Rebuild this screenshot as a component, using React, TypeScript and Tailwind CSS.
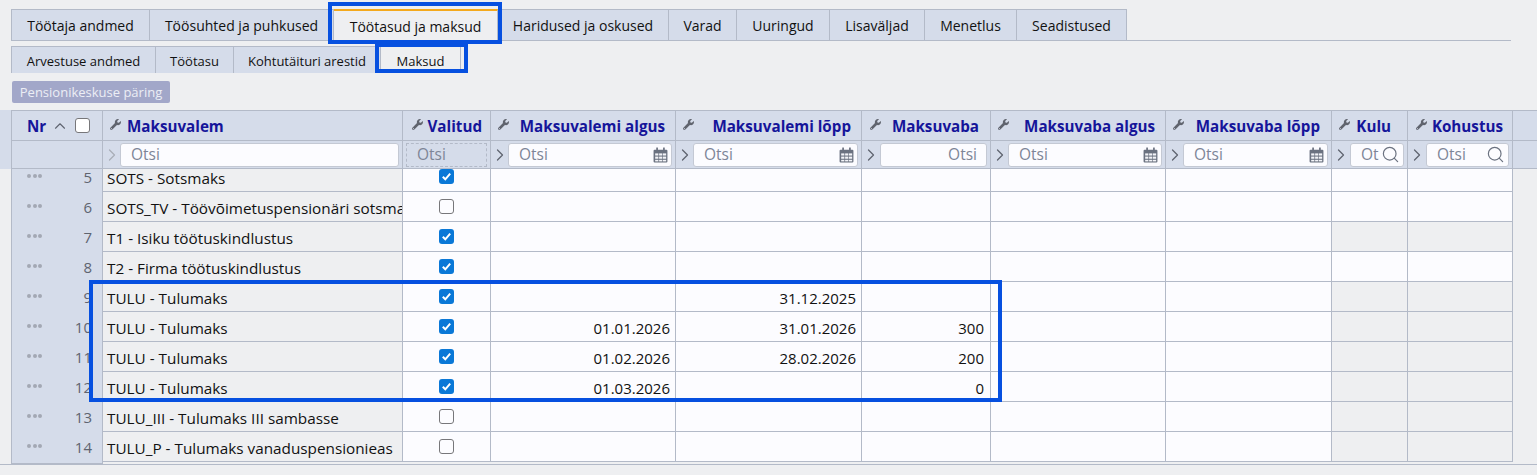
import React from "react";
import { ChevronRight, ChevronUp, Search } from "lucide-react";
import { FaWrench } from "react-icons/fa";

const GRID = "grid grid-cols-[92px_300px_88px_185px_186px_129px_175px_166px_76px_105px]";
const LINE = "border-[#b3bac8]";

const topTabs = [
  { t: "Töötaja andmed", w: "w-[139px]" },
  { t: "Töösuhted ja puhkused", w: "w-[184px]" },
  { t: "Töötasud ja maksud", w: "w-[164px]", active: true },
  { t: "Haridused ja oskused", w: "w-[171px]" },
  { t: "Varad", w: "w-[68px]" },
  { t: "Uuringud", w: "w-[93px]" },
  { t: "Lisaväljad", w: "w-[95px]" },
  { t: "Menetlus", w: "w-[92px]" },
  { t: "Seadistused", w: "w-[110px]" },
];

const subTabs = [
  { t: "Arvestuse andmed", w: "w-[145px]" },
  { t: "Töötasu", w: "w-[78px]" },
  { t: "Kohtutäituri arestid", w: "w-[147px]" },
  { t: "Maksud", w: "w-[80px]", active: true },
];

const heads = [
  { t: "Maksuvalem", c: "justify-start pl-[7px]", g: "ml-[6px]" },
  { t: "Valitud", c: "justify-between pl-[9px] pr-[8px]", g: "" },
  { t: "Maksuvalemi algus", c: "justify-between pl-[7px] pr-[10px]", g: "" },
  { t: "Maksuvalemi lõpp", c: "justify-between pl-[7px] pr-[10px]", g: "" },
  { t: "Maksuvaba", c: "justify-between pl-[8px] pr-[11px]", g: "" },
  { t: "Maksuvaba algus", c: "justify-between pl-[7px] pr-[10px]", g: "" },
  { t: "Maksuvaba lõpp", c: "justify-between pl-[7px] pr-[11px]", g: "" },
  { t: "Kulu", c: "justify-between pl-[7px] pr-[16px]", g: "" },
  { t: "Kohustus", c: "justify-between pl-[8px] pr-[9px]", g: "" },
];

type Row = { n: number; name: string; on: boolean; a?: string; b?: string; v?: string; gray?: boolean };
const rows: Row[] = [
  { n: 5, name: "SOTS - Sotsmaks", on: true },
  { n: 6, name: "SOTS_TV - Töövõimetuspensionäri sotsmaks", on: false },
  { n: 7, name: "T1 - Isiku töötuskindlustus", on: true, gray: true },
  { n: 8, name: "T2 - Firma töötuskindlustus", on: true },
  { n: 9, name: "TULU - Tulumaks", on: true, b: "31.12.2025", gray: true },
  { n: 10, name: "TULU - Tulumaks", on: true, a: "01.01.2026", b: "31.01.2026", v: "300", gray: true },
  { n: 11, name: "TULU - Tulumaks", on: true, a: "01.02.2026", b: "28.02.2026", v: "200", gray: true },
  { n: 12, name: "TULU - Tulumaks", on: true, a: "01.03.2026", v: "0", gray: true },
  { n: 13, name: "TULU_III - Tulumaks III sambasse", on: false, gray: true },
  { n: 14, name: "TULU_P - Tulumaks vanaduspensionieas", on: false, gray: true },
];

function Calendar() {
  return (
    <svg width="15" height="16" viewBox="0 0 14 15" className="shrink-0">
      <path d="M1.5 2.5h11a1 1 0 0 1 1 1v10a1 1 0 0 1-1 1h-11a1 1 0 0 1-1-1v-10a1 1 0 0 1 1-1z" fill="#6b7280" />
      <rect x="3" y="0.5" width="1.6" height="3" fill="#6b7280" />
      <rect x="9.4" y="0.5" width="1.6" height="3" fill="#6b7280" />
      <g fill="#f3f4f8">
        <rect x="2" y="6" width="3" height="2" />
        <rect x="5.7" y="6" width="3" height="2" />
        <rect x="9.3" y="6" width="3" height="2" />
        <rect x="2" y="9" width="3" height="2" />
        <rect x="5.7" y="9" width="3" height="2" />
        <rect x="9.3" y="9" width="3" height="2" />
        <rect x="2" y="12" width="3" height="1.5" />
        <rect x="5.7" y="12" width="3" height="1.5" />
        <rect x="9.3" y="12" width="3" height="1.5" />
      </g>
    </svg>
  );
}

function Check({ on, small }: { on: boolean; small?: boolean }) {
  if (on) {
    return (
      <span className="flex h-[15px] w-[15px] items-center justify-center rounded-[3px] bg-[#0a78d7]">
        <svg width="11" height="11" viewBox="0 0 11 11">
          <path d="M1.8 5.8 4.3 8.3 9.2 2.6" fill="none" stroke="#ffffff" strokeWidth="2" />
        </svg>
      </span>
    );
  }
  return <span className={`block h-[15px] w-[15px] rounded-[3px] border border-[#77777a] ${small ? "bg-white" : "bg-[#fcfcff]"}`} />;
}

function Filter({ kind, w, right, faded, text = "Otsi" }: { kind?: "cal" | "search"; w: string; right?: boolean; faded?: boolean; text?: string }) {
  return (
    <div className="flex h-full items-center justify-between pr-[3px]">
      <ChevronRight size={20} strokeWidth={1.5} className={`-mr-[4px] -ml-[1px] shrink-0 ${faded ? "text-[#a9aeb8]" : "text-[#5f6470]"}`} />
      <div className={`flex h-[24px] shrink-0 items-center rounded-[3px] border border-[#c4c9d4] bg-[#fcfcff] pl-[10px] pr-[3px] ${w}`}>
        <span className={`flex-1 overflow-hidden whitespace-nowrap pt-[1px] text-[15.5px] text-[#7d8597] ${right ? "pr-[6px] text-right" : ""}`}>{text}</span>
        {kind === "cal" && <Calendar />}
        {kind === "search" && <Search size={19} strokeWidth={1.5} className="shrink-0 text-[#6b7280]" />}
      </div>
    </div>
  );
}

export default function App() {
  return (
    <div className="relative h-[475px] w-full overflow-hidden bg-[#eeeff1] pt-[9px] font-['Open_Sans','Noto_Sans',sans-serif] text-[14px] text-[#111]">
      {/* main tabs */}
      <div className={`ml-[11px] flex h-[32px] w-[1500px] border-b ${LINE}`}>
        {topTabs.map((tab) => (
          <div
            key={tab.t}
            className={`flex items-center justify-center border-t border-r pt-[1px] first:border-l ${LINE} ${tab.w} ${
              tab.active ? "border-t-2 border-t-[#f4a91c] bg-[#eeeff1]" : "bg-[#d5dcea]"
            }`}
          >
            {tab.t}
          </div>
        ))}
      </div>

      {/* sub tabs */}
      <div className="ml-[11px] mt-[5px] flex h-[27px] text-[13px]">
        {subTabs.map((tab) => (
          <div
            key={tab.t}
            className={`flex items-center justify-center border-t border-r pt-[3px] first:border-l ${LINE} ${tab.w} ${
              tab.active ? "bg-[#eeeff1]" : "bg-[#d5dcea]"
            }`}
          >
            {tab.t}
          </div>
        ))}
      </div>

      <button className="ml-[12px] mt-[8px] flex h-[22px] w-[158px] items-center justify-center rounded-[2px] bg-[#a2a7c9] pt-[1px] text-[13px] text-[#eceef5]">
        Pensionikeskuse päring
      </button>

      {/* table */}
      <div className={`mt-[7px] border-b ${LINE} pl-[11px]`}>
        <div className="-ml-[11px] bg-[#d5dcea] pl-[11px]">
          <div className={`${GRID} h-[30px] border-t ${LINE} text-[15.2px] font-bold text-[#15159a]`}>
            <div className={`flex items-center border-l border-r ${LINE} pl-[15px]`}>
              <span className="pt-[1px]">Nr</span>
              <ChevronUp size={18} strokeWidth={1.5} className="ml-[5px] text-[#5f6470]" />
              <span className="ml-[6px] mb-[1px]">
                <Check on={false} small />
              </span>
            </div>
            {heads.map((h) => (
              <div key={h.t} className={`flex items-center whitespace-nowrap border-r ${LINE} ${h.c}`}>
                <FaWrench size={11} className="mb-[3px] shrink-0 text-[#60646e]" />
                <span className={`pt-[1px] ${h.g}`}>{h.t}</span>
              </div>
            ))}
          </div>
          <div className={`${GRID} h-[29px] border-y ${LINE} font-normal`}>
            <div className={`border-l border-r ${LINE}`} />
            <div className={`border-r ${LINE}`}>
              <Filter w="w-[279px]" faded />
            </div>
            <div className={`flex items-center justify-center border-r ${LINE}`}>
              <div className="flex h-[24px] w-[81px] items-center border border-dashed border-[#b3bac8] pl-[10px] pt-[1px] text-[15.5px] text-[#7d8597]">Otsi</div>
            </div>
            <div className={`border-r ${LINE}`}><Filter w="w-[164px]" kind="cal" /></div>
            <div className={`border-r ${LINE}`}><Filter w="w-[165px]" kind="cal" /></div>
            <div className={`border-r ${LINE}`}><Filter w="w-[107px]" right /></div>
            <div className={`border-r ${LINE}`}><Filter w="w-[154px]" kind="cal" /></div>
            <div className={`border-r ${LINE}`}><Filter w="w-[145px]" kind="cal" /></div>
            <div className={`border-r ${LINE}`}><Filter w="w-[54px]" kind="search" text="Ot" /></div>
            <div className={`border-r ${LINE}`}><Filter w="w-[83px]" kind="search" /></div>
          </div>
        </div>

        {/* scrolled body */}
        <div className="h-[295px] overflow-hidden">
          <div className="-mt-[7px]">
            {rows.map((r, i) => {
              const cell = `flex h-[30px] items-center justify-end border-r border-b ${LINE} bg-[#fcfcff] pt-[4px] pr-[5px] text-[15px]`;
              const numCell = `flex h-[30px] items-center justify-end border-r border-b ${LINE} bg-[#fcfcff] pt-[4px] pr-[6px] text-[15px]`;
              const grayCell = `h-[30px] border-r border-b ${LINE} ${r.gray ? "bg-[#eeeff1]" : "bg-[#fcfcff]"}`;
              return (
                <div key={r.n} className={`${GRID} h-[30px]`}>
                  <div className={`flex items-start border-l border-r ${LINE} bg-[#d5dcea] ${i === rows.length - 1 ? "h-[32px] border-b" : "h-[30px]"}`}>
                    <div className="flex h-[30px] w-full items-center justify-between pl-[15px] pr-[10px]">
                      <span className="mb-[2px] flex gap-[1.5px]">
                        <i className="block h-[4px] w-[4px] rounded-full bg-[#a3a8b4]" />
                        <i className="block h-[4px] w-[4px] rounded-full bg-[#a3a8b4]" />
                        <i className="block h-[4px] w-[4px] rounded-full bg-[#a3a8b4]" />
                      </span>
                      <span className="text-[15px] text-[#5f6470]">{r.n}</span>
                    </div>
                  </div>
                  <div className={`flex h-[30px] items-center overflow-hidden whitespace-nowrap border-r border-b ${LINE} bg-[#eeeff1] pt-[4px] pl-[4px] text-[15.3px]`}>
                    {r.name}
                  </div>
                  <div className={`flex h-[30px] items-center justify-center border-r border-b ${LINE} bg-[#fcfcff] pb-[1px] pr-[1px]`}>
                    <Check on={r.on} />
                  </div>
                  <div className={cell}>{r.a}</div>
                  <div className={cell}>{r.b}</div>
                  <div className={numCell}>{r.v}</div>
                  <div className={cell} />
                  <div className={cell} />
                  <div className={grayCell} />
                  <div className={grayCell} />
                </div>
              );
            })}
          </div>
        </div>
      </div>

      {/* highlight boxes drawn over the page */}
      <div className="pointer-events-none absolute left-[328px] top-[2px] h-[42px] w-[174px] border-4 border-[#0650e0]" />
      <div className="pointer-events-none absolute left-[375px] top-[43px] h-[30px] w-[93px] border-4 border-[#0650e0]" />
      <div className="pointer-events-none absolute left-[89px] top-[280px] h-[122px] w-[913px] border-4 border-[#0650e0]" />
    </div>
  );
}
